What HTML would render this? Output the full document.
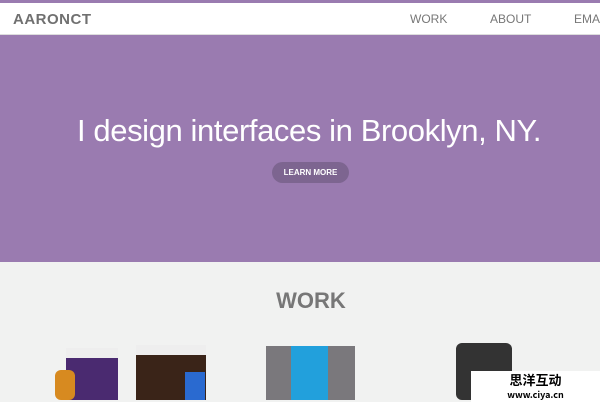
<!DOCTYPE html>
<html><head><style>
body{margin:0;width:600px;height:400px;overflow:hidden;font-family:"Liberation Sans",sans-serif;background:#f1f2f1;position:relative}
.top{position:absolute;top:0;left:0;width:600px;height:3px;background:#9a7bb0}
.nav{position:absolute;top:3px;left:0;width:600px;height:31px;background:#fff;border-bottom:1px solid #ddd}
.logo{position:absolute;left:13px;top:8px;font-weight:bold;font-size:15px;color:#707070;letter-spacing:0.5px}
.nl{position:absolute;top:9px;font-size:12px;color:#777}
.hero{position:absolute;top:35px;left:0;width:600px;height:227px;background:#9a7bb0}
.h1{position:absolute;top:78px;left:9px;width:600px;text-align:center;color:#fff;font-size:31px;letter-spacing:-0.4px}
.btn{position:absolute;left:272px;top:127px;width:77px;height:21px;border-radius:11px;background:#7d6590;color:#fff;font-size:8px;font-weight:bold;text-align:center;line-height:21px}
.work{position:absolute;top:288px;width:622px;text-align:center;font-weight:bold;font-size:22px;color:#777}
</style></head><body>
<div class="top"></div>
<div class="nav"><div class="logo">AARONCT</div>
<div class="nl" style="left:410px">WORK</div><div class="nl" style="left:490px">ABOUT</div><div class="nl" style="left:574px">EMA</div></div>
<div class="hero"><div class="h1">I design interfaces in Brooklyn, NY.</div><div class="btn">LEARN MORE</div></div>
<div class="work">WORK</div>
<div style="position:absolute;left:66px;top:348px;width:52px;height:52px;background:#4a2a70"></div>
<div style="position:absolute;left:66px;top:348px;width:52px;height:10px;background:#eee"></div>
<div style="position:absolute;left:136px;top:345px;width:70px;height:55px;background:#3a2418"></div>
<div style="position:absolute;left:136px;top:345px;width:70px;height:10px;background:#eee"></div>
<div style="position:absolute;left:55px;top:370px;width:20px;height:30px;background:#d78a20;border-radius:6px"></div>
<div style="position:absolute;left:185px;top:372px;width:20px;height:28px;background:#2a6ad0"></div>
<div style="position:absolute;left:266px;top:346px;width:89px;height:54px;background:#7a787c"></div>
<div style="position:absolute;left:291px;top:346px;width:37px;height:54px;background:#22a0dc"></div>
<div style="position:absolute;left:456px;top:343px;width:56px;height:57px;background:#333;border-radius:6px"></div>
<div style="position:absolute;left:471px;top:371px;width:129px;height:29px;background:#fff;font-family:'Noto Sans CJK SC',sans-serif;font-size:13px;line-height:13px;text-align:center;padding-top:2px;font-weight:bold">思洋互动<br><span style="font-size:9px">www.ciya.cn</span></div>
</body></html>
